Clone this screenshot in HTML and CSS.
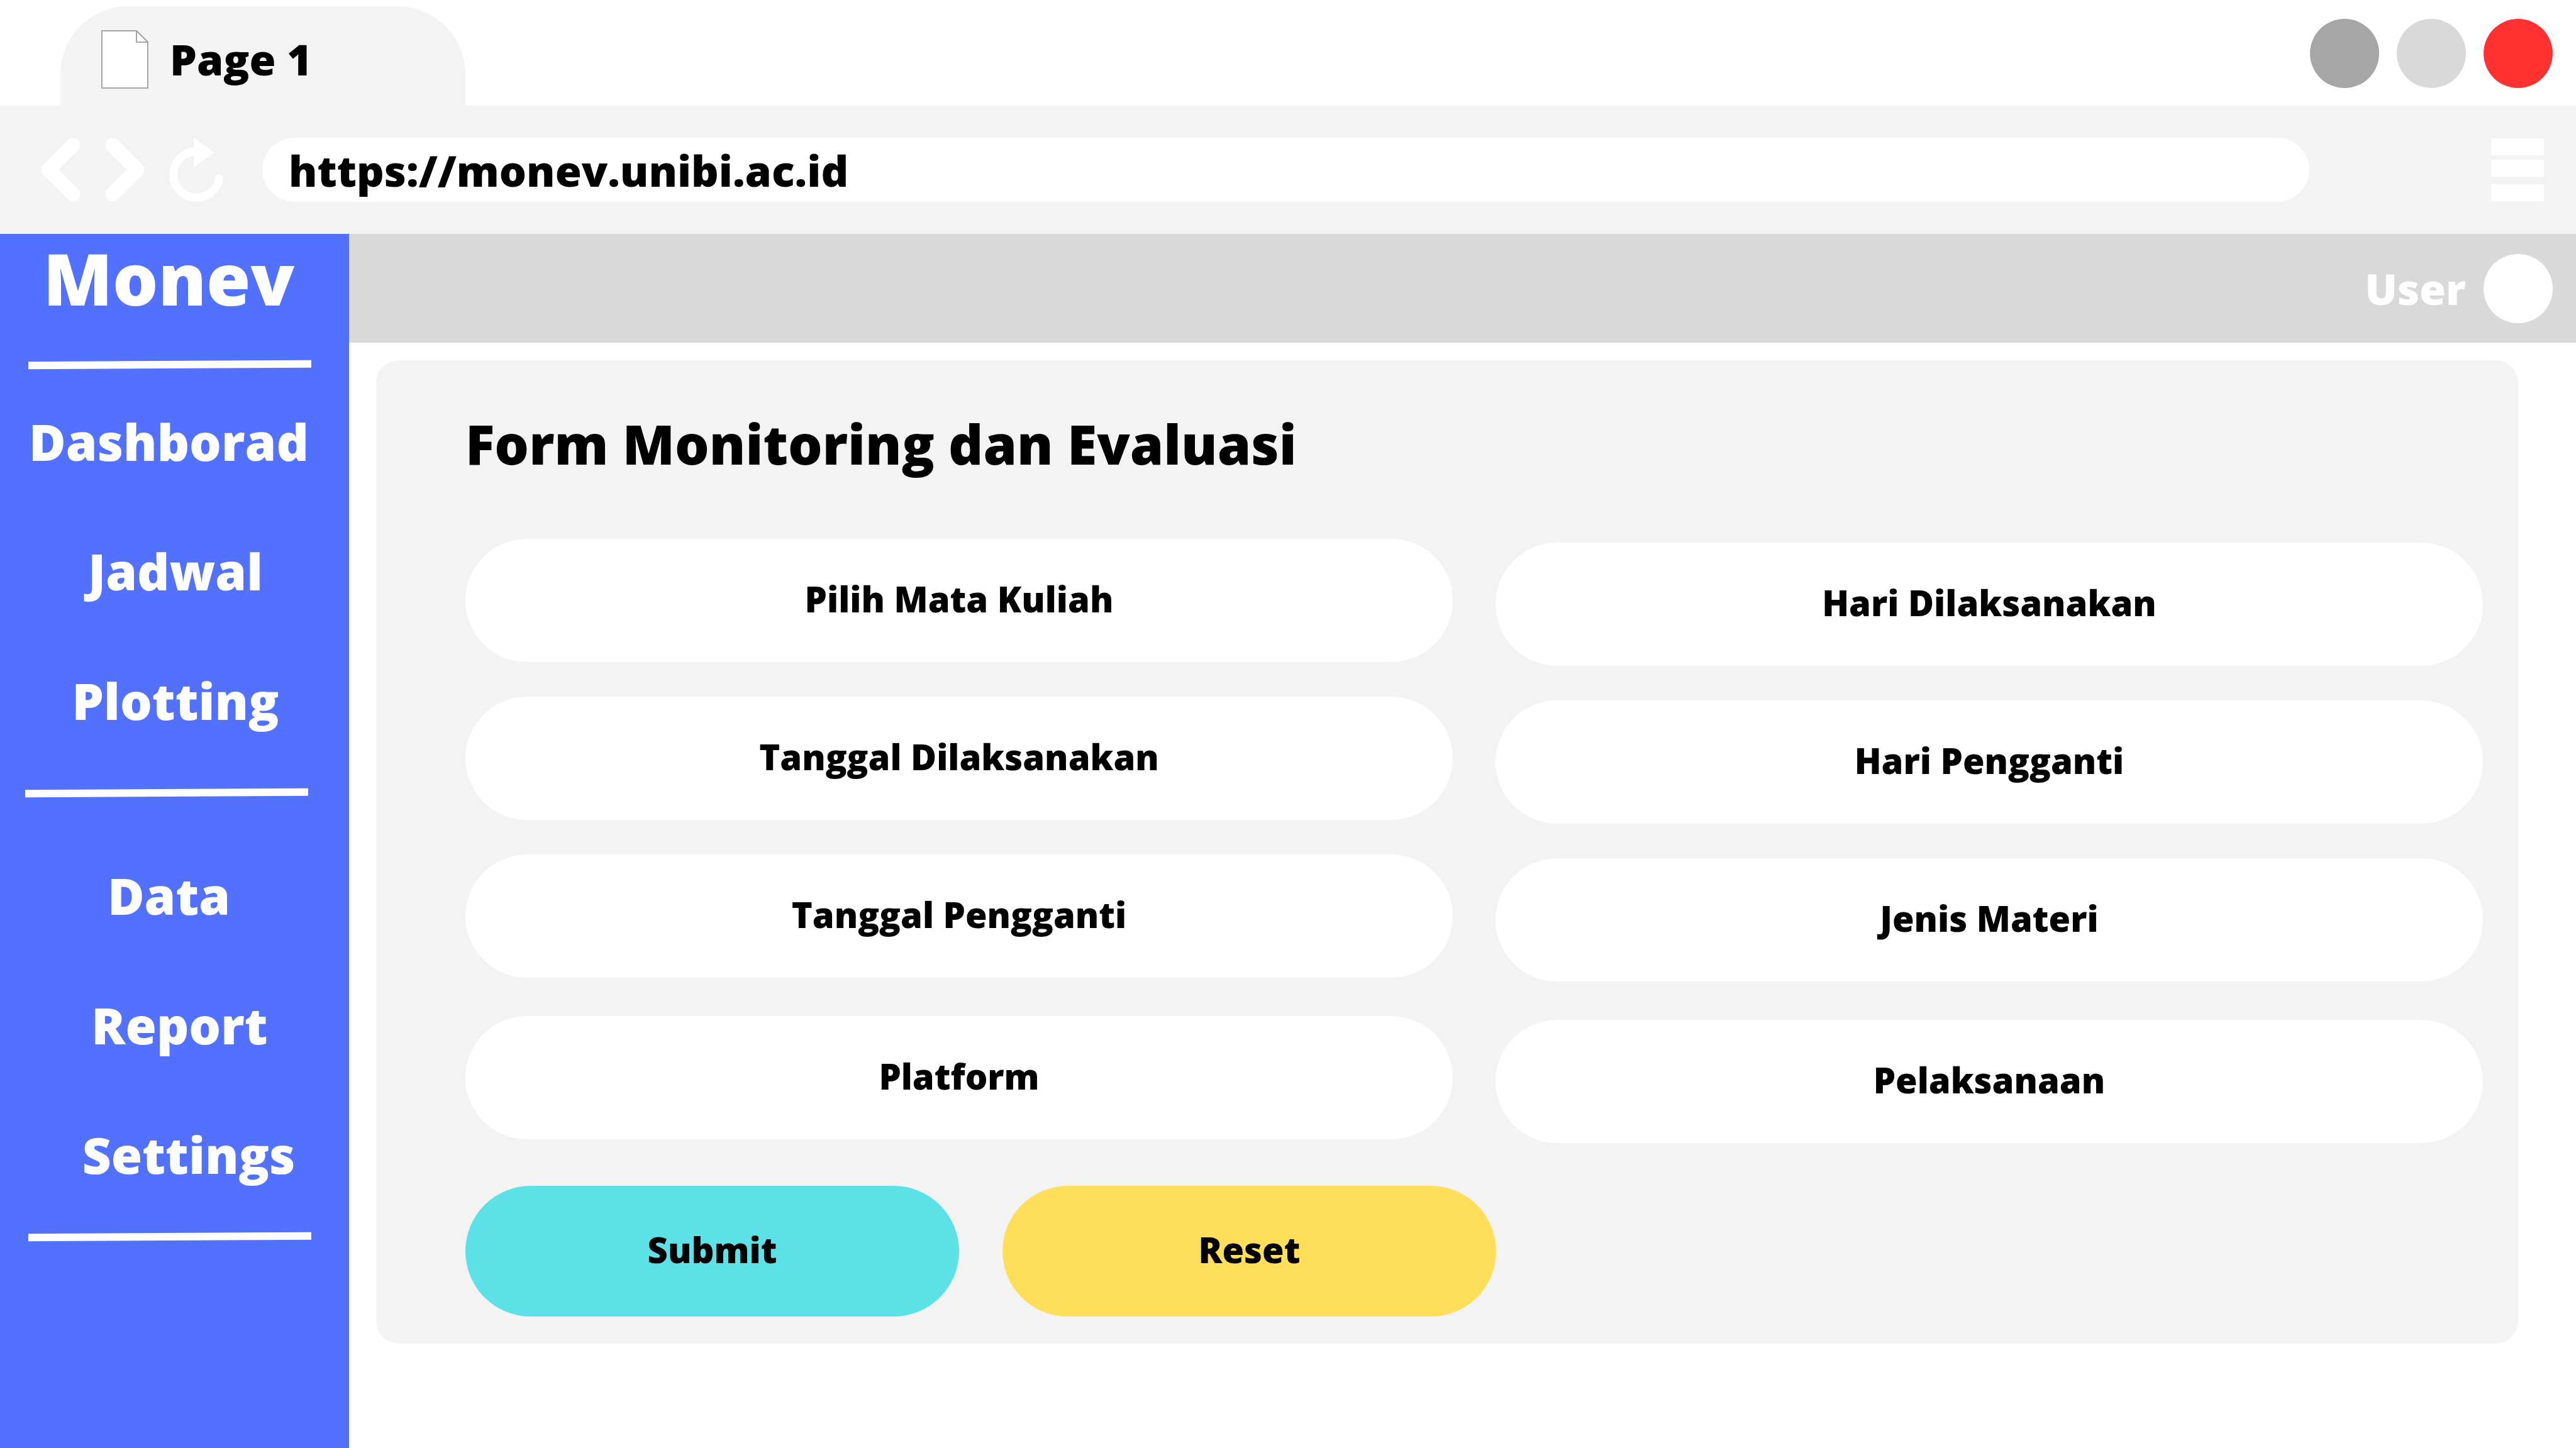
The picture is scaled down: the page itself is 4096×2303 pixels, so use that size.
FILE: index.html
```html
<!DOCTYPE html>
<html lang="id">
<head>
  <meta charset="utf-8">
  <title>Monev</title>
  <link rel="stylesheet" href="styles.css">
</head>
<body>
  <header class="browser">
    <div class="tabs">
      <div class="tab">
        <svg class="tab-icon" viewBox="0 0 75 93" aria-hidden="true">
          <path d="M1 1H56L74 19V92H1Z"/>
          <path d="M56 1V19H74Z"/>
        </svg>
        <span>Page 1</span>
      </div>
      <div class="window-controls">
        <button class="dot dot-dark" type="button" aria-label="Minimize"></button>
        <button class="dot dot-light" type="button" aria-label="Maximize"></button>
        <button class="dot dot-red" type="button" aria-label="Close"></button>
      </div>
    </div>
    <div class="toolbar">
      <button class="tool back" type="button" aria-label="Back">
        <svg viewBox="0 0 63 102" aria-hidden="true"><path class="chevron" d="M51 12L12 51L51 90"/></svg>
      </button>
      <button class="tool forward" type="button" aria-label="Forward">
        <svg viewBox="0 0 63 102" aria-hidden="true"><path class="chevron" d="M12 12L51 51L12 90"/></svg>
      </button>
      <button class="tool reload" type="button" aria-label="Reload">
        <svg viewBox="0 0 86 102" aria-hidden="true">
          <path class="arc" d="M42 22A36.7 36.7 0 1 0 79.5 65"/>
          <path class="arrow" d="M39.3 0L71.6 23.7L39.3 46.7Z"/>
        </svg>
      </button>
      <input class="address" type="text" value="https://monev.unibi.ac.id" aria-label="Address">
      <button class="tool menu" type="button" aria-label="Menu">
        <svg viewBox="0 0 84 100" aria-hidden="true"><path class="bars" d="M0 0H84V27H0ZM0 34H84V61H0ZM0 73H84V100H0Z"/></svg>
      </button>
    </div>
  </header>

  <div class="app">
    <aside class="sidebar">
      <h1 class="brand">Monev</h1>
      <hr class="rule rule-top">
      <nav class="nav">
        <a href="#">Dashborad</a>
        <a class="indent" href="#">Jadwal</a>
        <a class="indent" href="#">Plotting</a>
      </nav>
      <hr class="rule rule-middle">
      <nav class="nav nav-second">
        <a href="#">Data</a>
        <a class="indent-medium" href="#">Report</a>
        <a class="indent-deep" href="#">Settings</a>
      </nav>
      <hr class="rule rule-bottom">
    </aside>

    <div class="content">
      <div class="topbar">
        <span>User</span>
        <span class="avatar"></span>
      </div>
      <main class="panel">
        <h2 class="title">Form Monitoring dan Evaluasi</h2>
        <form>
          <div class="fields">
            <div class="column">
              <input class="field" type="text" placeholder="Pilih Mata Kuliah" aria-label="Pilih Mata Kuliah">
              <input class="field" type="text" placeholder="Tanggal Dilaksanakan" aria-label="Tanggal Dilaksanakan">
              <input class="field" type="text" placeholder="Tanggal Pengganti" aria-label="Tanggal Pengganti">
              <input class="field" type="text" placeholder="Platform" aria-label="Platform">
            </div>
            <div class="column column-right">
              <input class="field" type="text" placeholder="Hari Dilaksanakan" aria-label="Hari Dilaksanakan">
              <input class="field" type="text" placeholder="Hari Pengganti" aria-label="Hari Pengganti">
              <input class="field" type="text" placeholder="Jenis Materi" aria-label="Jenis Materi">
              <input class="field" type="text" placeholder="Pelaksanaan" aria-label="Pelaksanaan">
            </div>
          </div>
          <div class="actions">
            <button class="action submit" type="submit">Submit</button>
            <button class="action reset" type="reset">Reset</button>
          </div>
        </form>
      </main>
    </div>
  </div>
</body>
</html>
```

FILE: styles.css
```css
* {
  box-sizing: border-box;
}

body {
  margin: 0;
  min-height: 100vh;
  display: flex;
  flex-direction: column;
  background: #fff;
  color: #000;
  font-family: "Open Sans", "Noto Sans", sans-serif;
  font-weight: 800;
  font-size: 68px;
}

button,
input {
  font: inherit;
  color: inherit;
  border: 0;
  padding: 0;
  margin: 0;
}

/* Browser frame */
.tabs {
  display: flex;
  justify-content: space-between;
  height: 168px;
  padding: 10px 37px 0 96px;
}

.tab {
  display: flex;
  align-items: center;
  gap: 34px;
  width: 644px;
  padding: 10px 65px 0;
  border-radius: 108px 108px 0 0;
  background: #f3f3f3;
  line-height: 96px;
}

.tab-icon {
  width: 75px;
  height: 93px;
  fill: #fff;
  stroke: #a6a6a6;
  stroke-width: 2;
}

.window-controls {
  display: flex;
  gap: 28px;
  padding-top: 20px;
}

.dot {
  width: 110px;
  height: 110px;
  border-radius: 50%;
}

.dot-dark {
  background: #a6a6a6;
}

.dot-light {
  background: #d9d9d9;
}

.dot-red {
  background: #ff3131;
}

.toolbar {
  display: flex;
  align-items: center;
  height: 204px;
  padding: 0 51px 0 65px;
  background: #f3f3f3;
}

.tool {
  flex: none;
  background: none;
}

.tool svg {
  display: block;
  fill: none;
  stroke: #fff;
}

.back,
.forward {
  width: 63px;
  margin-right: 39px;
}

.reload {
  width: 86px;
  margin-right: 62px;
}

.chevron {
  stroke-width: 23;
  stroke-linecap: round;
  stroke-linejoin: round;
}

.arc {
  stroke-width: 13;
  stroke-linecap: round;
}

.arrow,
.bars {
  fill: #fff;
  stroke: none;
}

.address {
  flex: 1;
  min-width: 0;
  height: 102px;
  padding: 0 42px;
  border-radius: 51px;
  background: #fff;
}

.menu {
  width: 84px;
  margin-left: 289px;
}

/* Application */
.app {
  flex: 1;
  display: flex;
}

.sidebar {
  flex: none;
  width: 555px;
  padding-right: 18px;
  background: #5271ff;
  color: #fff;
  text-align: center;
}

.brand {
  margin: 0;
  font-size: 114px;
  font-weight: 800;
  line-height: 140px;
}

.rule {
  width: 450px;
  height: 12px;
  margin: 0 0 0 45px;
  border: 0;
  background: #fff;
  transform: rotate(-0.3deg);
}

.rule-top {
  margin-top: 62px;
  margin-bottom: 13px;
}

.rule-middle {
  margin-top: 38px;
  margin-left: 40px;
}

.rule-bottom {
  margin-top: 22px;
}

.nav {
  display: flex;
  flex-direction: column;
  font-size: 80px;
  line-height: 206px;
}

.nav-second {
  margin-top: 54px;
}

.nav a {
  color: inherit;
  text-decoration: none;
}

.nav .indent {
  padding-left: 21px;
}

.nav .indent-medium {
  padding-left: 34px;
}

.nav .indent-deep {
  padding-left: 63px;
}

.content {
  flex: 1;
  min-width: 0;
}

.topbar {
  display: flex;
  align-items: center;
  justify-content: flex-end;
  gap: 28px;
  height: 173px;
  padding-right: 37px;
  background: #d9d9d9;
  color: #fff;
}

.avatar {
  width: 110px;
  height: 110px;
  border-radius: 50%;
  background: #fff;
}

.panel {
  margin: 28px 92px 0 43px;
  padding: 73px 56px 43px 142px;
  border-radius: 36px;
  background: #f3f3f3;
}

.title {
  margin: 0 0 91px;
  font-size: 86px;
  font-weight: 800;
  line-height: 120px;
}

.fields {
  display: grid;
  grid-template-columns: 1fr 1fr;
  gap: 68px;
  font-size: 56px;
}

.column {
  display: flex;
  flex-direction: column;
  gap: 55px;
}

.column-right {
  padding-top: 6px;
}

.field {
  width: 100%;
  height: 196px;
  padding: 0 98px 6px;
  border-radius: 98px;
  background: #fff;
  text-align: center;
}

.field:last-child {
  margin-top: 6px;
}

.field::placeholder {
  color: #000;
  opacity: 1;
}

.actions {
  display: flex;
  gap: 69px;
  margin-top: 68px;
  font-size: 56px;
}

.action {
  width: 785px;
  height: 208px;
  padding-bottom: 6px;
  border-radius: 104px;
}

.submit {
  background: #5ce1e6;
}

.reset {
  background: #ffde59;
}
```
